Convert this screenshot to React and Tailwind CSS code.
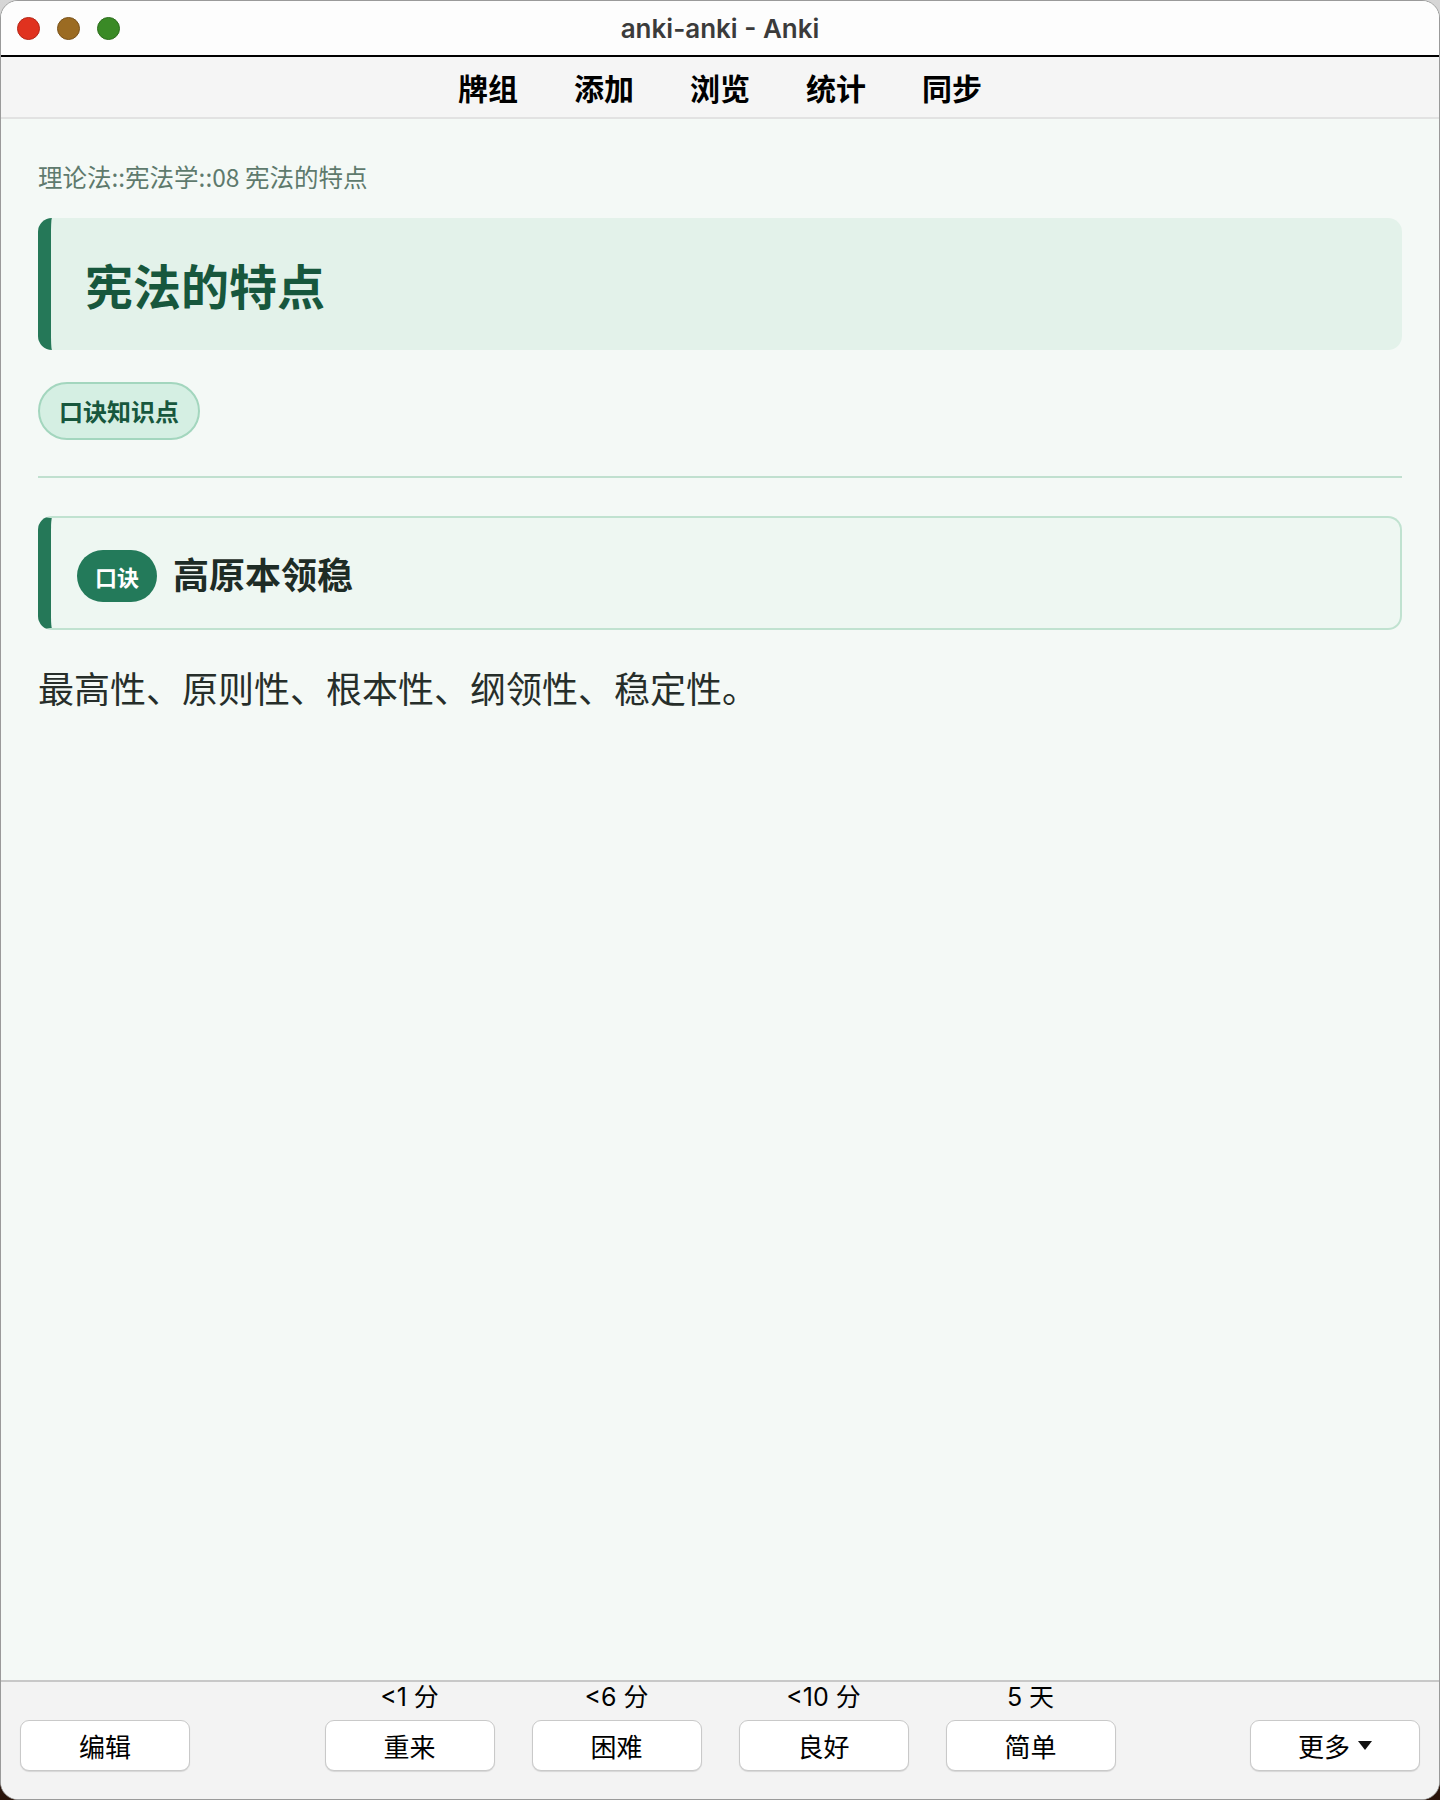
import React from "react";

const cjk = { fontFamily: '"Noto Sans CJK SC", "Noto Sans", sans-serif' };
const ui = { fontFamily: 'Inter, "Noto Sans CJK SC", "Liberation Sans", sans-serif' };

const answers = [
  { label: "<1 分", text: "重来" },
  { label: "<6 分", text: "困难" },
  { label: "<10 分", text: "良好" },
  { label: "5 天", text: "简单" },
];

const navItems = ["牌组", "添加", "浏览", "统计", "同步"];

const Button = ({ children }) => (
  <button className="w-[170px] h-[51px] bg-white border border-[#c9c9c9] rounded-[9px] shadow-[0_1px_1px_rgba(0,0,0,0.12)] text-[26px] text-black leading-none flex items-center justify-center gap-2">
    {children}
  </button>
);

export default function App() {
  return (
    <div className="w-[1440px] h-[1800px] bg-gradient-to-b from-[#d6d6d6] via-[#8a7a70] to-[#2a140a]" style={cjk}>
      <div className="w-full h-full flex flex-col rounded-[18px] overflow-hidden border border-[#9a9a9a] bg-[#f4f9f6]">
        {/* title bar */}
        <div className="h-[56px] shrink-0 bg-[#fdfdfd] border-b-[2px] border-black flex items-center relative">
          <div className="flex items-center gap-[17px] pl-[16px]">
            <span className="w-[23px] h-[23px] rounded-full bg-[#e0321f] border border-[#b52516]" />
            <span className="w-[23px] h-[23px] rounded-full bg-[#9b6b22] border border-[#7a521a]" />
            <span className="w-[23px] h-[23px] rounded-full bg-[#3a8a26] border border-[#2c6d1c]" />
          </div>
          <div className="absolute inset-0 flex items-center justify-center text-[26px] font-semibold text-[#3b3b3b]" style={ui}>
            anki-anki - Anki
          </div>
        </div>

        {/* toolbar */}
        <div className="h-[62px] shrink-0 bg-[#f5f5f5] border-b-[2px] border-[#e2e2e2] flex items-center justify-center gap-[56px]">
          {navItems.map((n) => (
            <span key={n} className="text-[30px] font-bold text-black leading-none">{n}</span>
          ))}
        </div>

        {/* card content */}
        <div className="flex-1 px-[37px] pt-[40px] flex flex-col">
          <div className="text-[24.5px] leading-[36px] text-[#5e7a6d]">理论法::宪法学::08 宪法的特点</div>

          <div className="mt-[23px] h-[132px] bg-[#e3f2ea] border-l-[13px] border-[#257858] rounded-[14px] flex items-center pl-[34px]">
            <h1 className="text-[48px] font-bold text-[#17573d] leading-none">宪法的特点</h1>
          </div>

          <div className="mt-[32px]">
            <span className="inline-flex items-center h-[58px] px-[19px] rounded-full bg-[#d5efe3] border-[2px] border-[#a3d6be] text-[24px] font-bold text-[#17573d] leading-none">
              口诀知识点
            </span>
          </div>

          <div className="mt-[36px] h-[2px] bg-[#c0e0cf]" />

          <div className="mt-[38px] h-[114px] bg-[#eef7f2] border-[2px] border-l-[13px] border-[#c0e2d0] border-l-[#257858] rounded-[14px] flex items-center pl-[26px] gap-[16px]">
            <span className="h-[52px] w-[80px] mt-[6px] rounded-full bg-[#237a5a] text-white text-[22px] font-bold flex items-center justify-center leading-none">
              口诀
            </span>
            <span className="text-[36px] font-bold text-[#1e2c26] leading-none">高原本领稳</span>
          </div>

          <p className="mt-[31px] text-[36px] leading-[52px] text-[#262e2a]">
            最高性、原则性、根本性、纲领性、稳定性。
          </p>
        </div>

        {/* answer bar */}
        <div className="h-[119px] shrink-0 bg-[#f3f3f3] border-t-[2px] border-[#c8c8c8] flex items-start justify-between px-[19px] pt-[4px]">
          <div className="pt-[34px]">
            <Button>编辑</Button>
          </div>
          <div className="flex gap-[37px] ml-[64px]">
            {answers.map((a) => (
              <div key={a.text} className="flex flex-col items-center">
                <div className="h-[34px] pb-[11px] flex items-center text-[25px] text-black leading-none" style={ui}>{a.label}</div>
                <Button>{a.text}</Button>
              </div>
            ))}
          </div>
          <div className="pt-[34px] ml-[64px]">
            <Button>
              <span>更多</span>
              <svg width="14" height="9" viewBox="0 0 14 9"><path d="M0 0h14L7 9z" fill="#111" /></svg>
            </Button>
          </div>
        </div>
      </div>
    </div>
  );
}
